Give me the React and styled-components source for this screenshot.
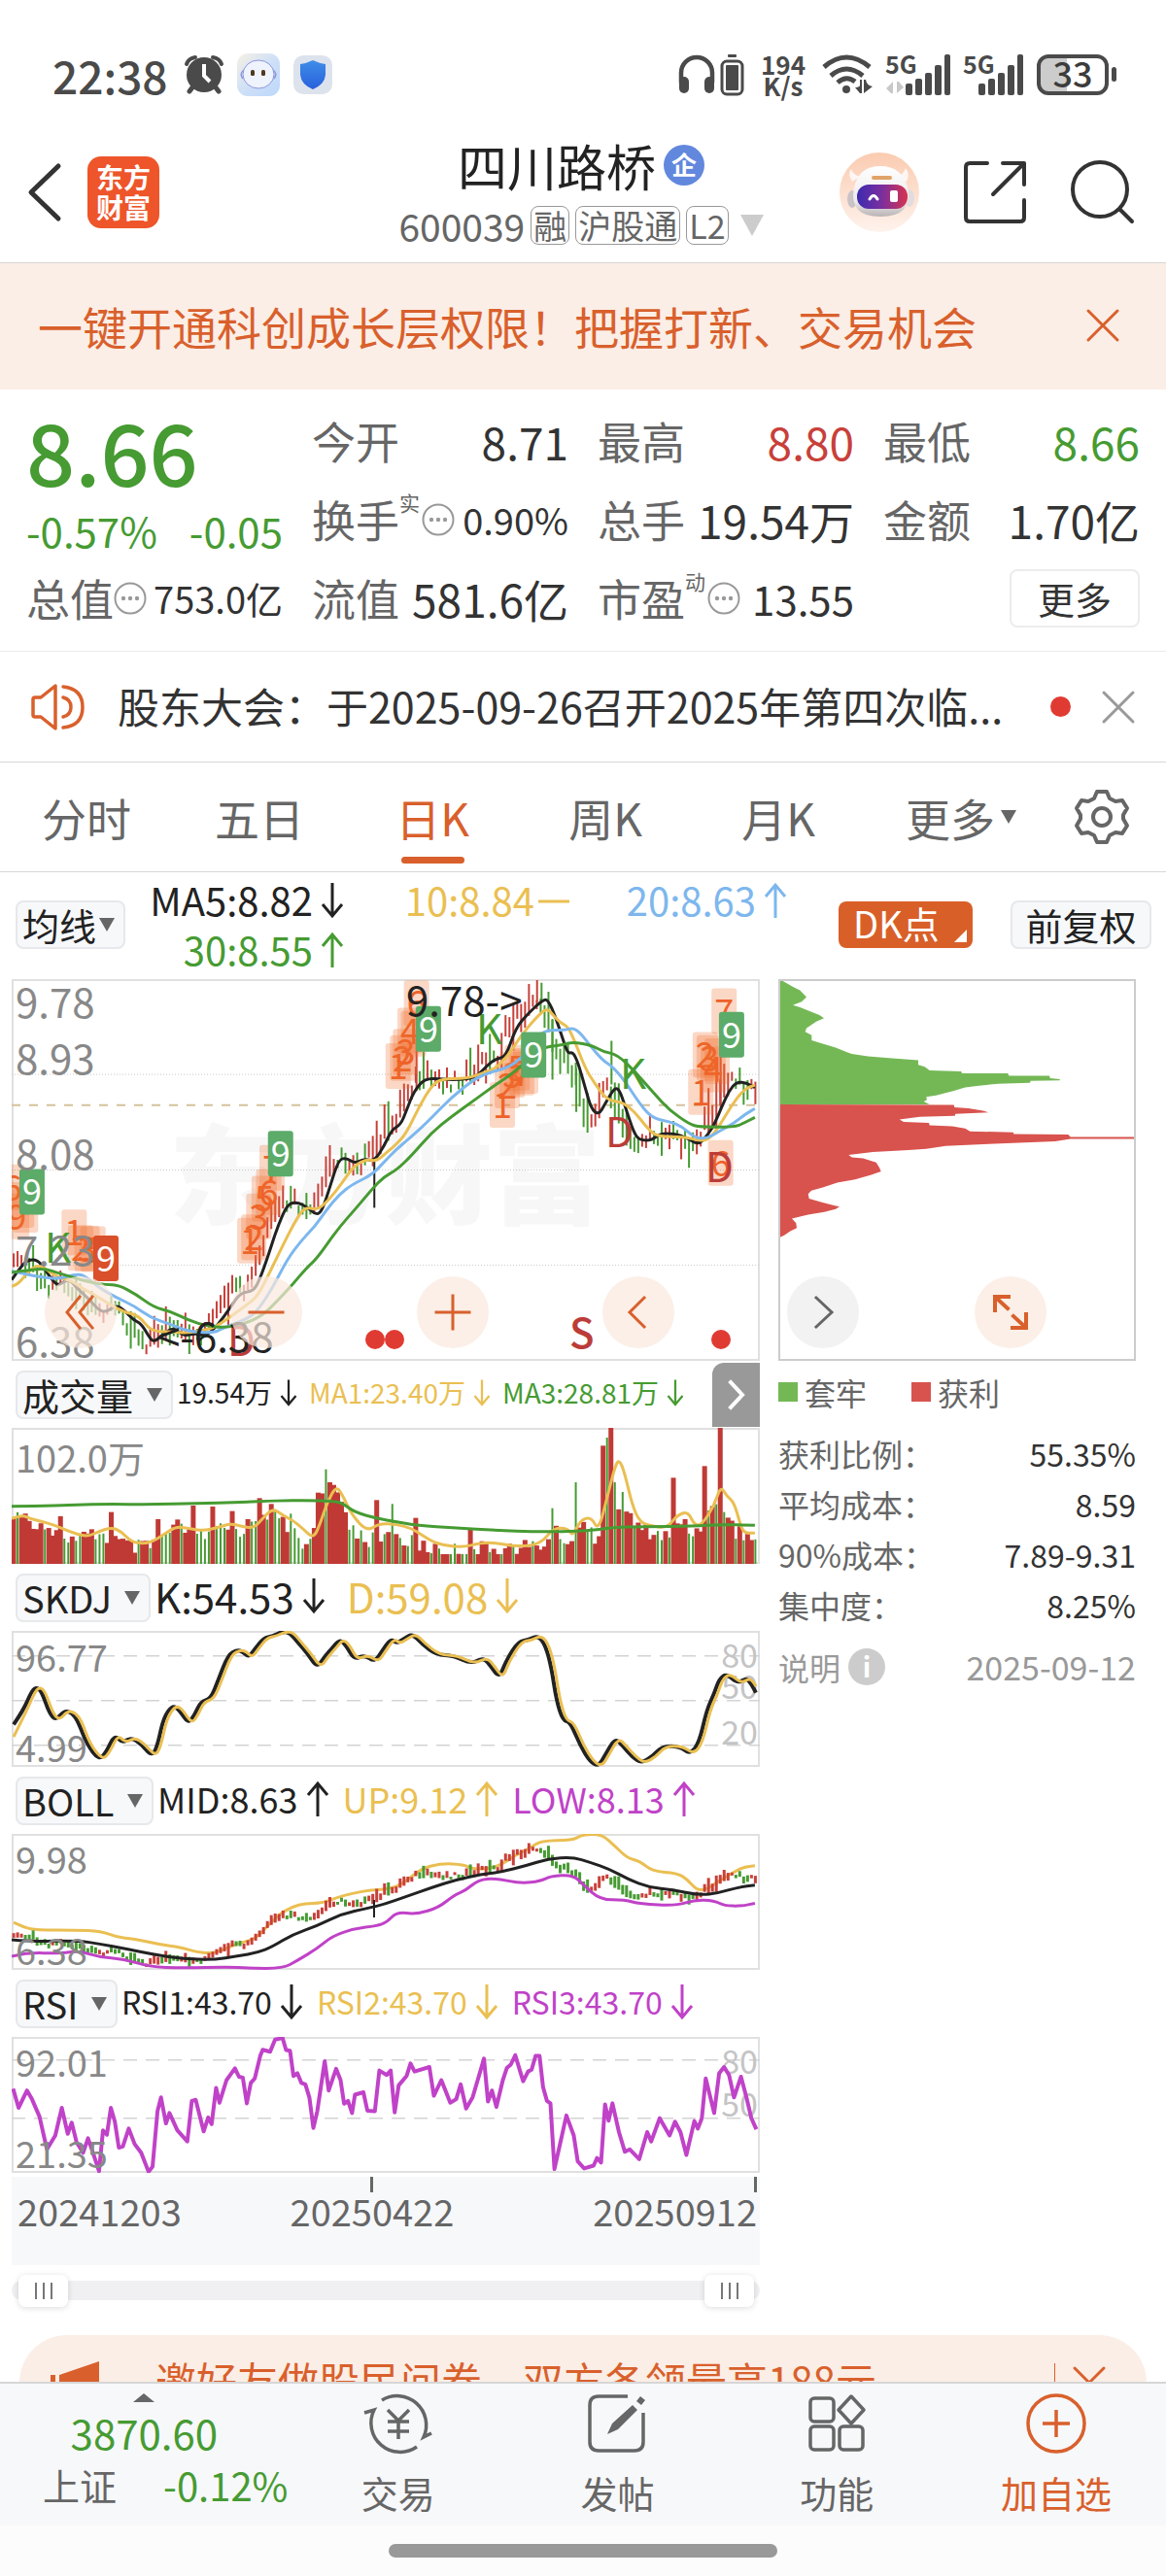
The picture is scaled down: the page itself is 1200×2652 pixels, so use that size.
import React from 'react'
import styled, { createGlobalStyle } from 'styled-components'

const colors = {
  black: '#222222',
  text: '#333333',
  label: '#666666',
  muted: '#999999',
  green: '#469b32',
  red: '#c8403a',
  orange: '#d9602c',
  orangeSoft: '#fbeee6',
  yellow: '#eabf52',
  blue: '#7db7ee',
  magenta: '#c042c8',
  panel: '#f7f8fa',
  line: '#d6d6d6',
  frame: '#e0e0e0'
}

const GlobalStyle = createGlobalStyle`
  * {
    box-sizing: border-box;
  }

  body {
    margin: 0;
    color: ${colors.text};
    background-color: #ffffff;
    font-family: 'Noto Sans CJK SC', 'Noto Sans', sans-serif;
  }

  button, select, input {
    margin: 0;
    padding: 0;
    border: 0;
    color: inherit;
    background: none;
    font-family: inherit;
    font-size: inherit;
  }

  svg {
    display: block;
    flex: none;
    overflow: visible;
  }
`

/* ---------- data ---------- */

const quoteCells = [
  { label: '今开', value: '8.71' },
  { label: '最高', value: '8.80', color: colors.red },
  { label: '最低', value: '8.66', color: colors.green },
  { label: '换手', mark: '实', hint: true, value: '0.90%', size: 38 },
  { label: '总手', value: '19.54万' },
  { label: '金额', value: '1.70亿' }
]

const tabs = ['分时', '五日', '日K', '周K', '月K']

const averages = [
  { text: 'MA5:8.82', trend: 'down', color: colors.black },
  { text: '10:8.84', trend: 'flat', color: colors.yellow },
  { text: '20:8.63', trend: 'up', color: colors.blue },
  { text: '30:8.55', trend: 'up', color: colors.green }
]

const chipRows = [
  ['获利比例：', '55.35%'],
  ['平均成本：', '8.59'],
  ['90%成本：', '7.89-9.31'],
  ['集中度：', '8.25%']
]

const parse = text => text.split(' ').map(pair => pair.split(',').map(Number))

const ma5 = parse('24,985 40,950 55,925 75,922 90,950 105,985 118,1003 130,990 142,985 155,1010 180,1045 200,1080 215,1085 235,1062 255,1085 270,1110 285,1120 300,1160 310,1178 325,1160 350,1130 370,1160 395,1150 415,1160 440,1125 465,1070 485,1025 512,1020 525,980 540,915 560,820 580,750 600,745 620,760 638,785 650,770 665,700 683,612 700,608 715,625 735,610 755,618 775,570 790,520 808,505 820,460 835,400 858,360 895,365 930,365 960,358 980,325 1000,300 1020,295 1040,205 1065,160 1095,118 1105,118 1120,170 1135,240 1145,285 1155,280 1165,310 1180,390 1192,455 1207,475 1220,440 1240,388 1250,400 1262,455 1278,530 1290,553 1315,553 1330,532 1360,532 1385,545 1408,568 1425,540 1440,505 1455,450 1470,400 1485,372 1505,375 1522,390')
const ma10 = parse('24,1005 35,1003 60,955 80,938 100,960 120,980 142,985 170,1015 195,1035 220,1060 250,1085 280,1095 305,1145 340,1145 370,1150 400,1145 430,1135 460,1105 500,1060 520,1035 545,960 570,880 595,805 615,758 640,770 665,735 690,685 715,630 740,612 760,618 780,590 800,565 820,530 845,450 870,385 890,362 940,362 975,345 1000,330 1025,290 1050,230 1080,175 1103,143 1115,165 1130,190 1145,200 1160,250 1180,330 1200,380 1225,430 1255,435 1280,465 1305,515 1325,542 1380,542 1410,555 1430,550 1450,510 1475,445 1500,395 1522,382')
const ma20 = parse('24,958 50,968 90,978 120,982 150,968 170,970 200,1010 235,1040 270,1065 305,1103 340,1120 380,1145 430,1150 450,1135 500,1105 520,1080 550,1010 580,920 610,860 635,820 660,765 685,720 710,690 750,660 775,620 800,580 820,555 860,500 910,420 960,360 990,342 1030,325 1060,285 1080,240 1100,212 1140,212 1155,205 1170,220 1190,260 1215,305 1235,325 1260,370 1290,440 1315,485 1350,495 1375,510 1400,545 1425,548 1450,525 1480,500 1500,475 1522,455')
const ma30 = parse('24,962 60,955 90,950 120,965 180,993 215,1000 240,1002 275,1030 310,1070 345,1083 380,1110 420,1130 460,1133 495,1120 530,1095 560,1050 590,1000 620,945 640,918 680,830 720,760 750,705 775,665 800,645 830,600 870,530 910,480 960,425 1000,380 1030,350 1060,310 1090,270 1110,262 1135,258 1155,248 1195,260 1215,278 1245,288 1280,340 1320,410 1350,460 1390,503 1410,512 1480,512 1500,500 1522,482')

const volumeMa1 = parse('24,490 45,478 60,490 80,497 110,510 140,530 175,547 200,530 225,517 245,530 265,562 290,568 310,560 330,540 355,515 380,520 410,528 440,518 465,505 490,515 512,520 530,490 550,458 570,480 590,495 610,520 632,552 645,510 660,440 678,390 690,415 710,480 740,530 765,505 800,508 830,520 850,540 880,568 930,580 970,565 1000,565 1040,577 1090,570 1115,520 1145,520 1155,545 1170,495 1192,485 1207,528 1225,420 1240,330 1248,308 1258,340 1275,450 1290,500 1310,512 1345,520 1365,480 1387,468 1400,510 1415,510 1440,450 1453,390 1465,420 1480,440 1492,505 1500,535 1522,535')
const volumeMa3 = parse('24,452 70,452 150,448 220,445 300,447 400,443 480,440 560,435 620,434 670,436 690,442 715,470 760,490 800,500 840,511 920,519 1000,526 1080,531 1150,530 1200,526 1235,517 1300,515 1400,514 1450,508 1522,511')
// level the ordinary bars follow, without the single heavy days
const volumeBase = parse('24,470 100,510 150,555 200,530 265,575 300,575 360,510 400,550 430,520 490,520 530,460 570,490 620,575 650,420 680,400 705,500 740,550 790,540 850,570 900,585 1090,570 1120,530 1160,560 1180,490 1205,550 1250,430 1280,510 1350,545 1380,490 1400,540 1430,460 1460,450 1480,520 1522,550')
// x, y, 1 for a rise and 0 for a fall
const volumeSpikes = parse('120,483,1 222,470,1 316,492,1 387,450,1 433,453,1 465,467,1 527,427,1 550,445,1 590,475,0 645,410,1 661,338,0 669,378,1 763,433,1 795,445,0 842,488,1 950,525,1 1115,458,0 1162,378,0 1217,265,1 1226,240,0 1234,210,1 1242,378,0 1257,408,0 1359,364,1 1422,328,1 1453,210,1')

const skdj = parse('28,1125 48,1080 65,1020 75,1010 85,1025 100,1090 113,1112 130,1083 145,1088 158,1115 175,1185 200,1235 215,1210 231,1157 247,1182 265,1165 285,1185 307,1224 318,1190 330,1105 348,1066 362,1080 380,1123 393,1095 405,1055 425,1046 440,990 460,910 478,895 490,900 502,918 515,890 532,858 550,852 570,838 585,842 600,870 620,905 640,950 655,915 670,890 685,862 698,880 714,925 735,910 756,932 770,900 788,860 800,875 815,860 832,845 850,875 880,910 915,912 950,938 975,918 990,945 1007,982 1020,930 1045,868 1065,865 1085,850 1100,880 1112,950 1122,1050 1135,1113 1150,1118 1170,1190 1190,1240 1207,1254 1220,1220 1240,1167 1255,1190 1275,1225 1293,1244 1315,1225 1335,1192 1370,1192 1392,1217 1410,1180 1425,1080 1440,1030 1450,985 1465,968 1487,998 1505,982 1515,1000 1524,1027')

const bollUp = parse('28,445 50,460 75,467 150,467 205,470 235,488 270,492 320,508 365,517 395,530 425,535 450,525 475,508 515,493 540,455 565,420 590,400 615,390 650,390 680,373 710,362 745,352 775,350 800,342 820,325 850,290 890,275 935,278 950,290 980,292 1010,280 1035,255 1070,230 1090,210 1155,208 1170,195 1190,191 1215,193 1240,225 1265,260 1290,268 1315,298 1365,303 1385,320 1405,352 1425,350 1450,325 1480,300 1500,285 1522,282')
const bollMid = parse('24,495 60,500 160,498 200,507 250,520 310,538 370,550 430,553 480,542 520,532 550,515 590,480 640,455 690,420 740,405 775,393 820,370 870,345 920,322 970,307 1010,300 1060,282 1105,262 1155,257 1190,272 1230,292 1265,320 1310,345 1355,350 1410,367 1450,360 1490,343 1522,338')
const bollLow = parse('24,543 55,532 120,535 160,527 200,545 250,550 300,573 370,577 460,573 500,577 570,578 600,555 640,520 670,485 715,463 760,455 780,445 800,415 840,422 885,402 915,367 940,352 965,322 1000,318 1050,333 1090,326 1110,312 1155,308 1175,335 1210,380 1260,380 1290,392 1365,397 1400,380 1440,382 1460,397 1495,398 1522,390')

const rsi = parse('27,925 38,980 55,930 65,955 80,1005 95,1100 112,1060 125,980 137,1055 145,1023 155,1080 168,1110 178,1068 188,1110 200,1163 208,1045 216,1058 224,980 232,1020 240,1095 248,1092 260,1040 272,1085 285,1110 300,1165 308,1150 318,990 325,950 335,1025 342,995 358,1045 378,1077 387,960 395,957 411,1048 420,1008 427,1027 436,922 443,965 457,900 474,866 482,890 490,893 498,967 506,908 514,895 525,830 530,812 545,818 555,783 570,778 577,813 585,815 592,888 600,880 608,908 616,912 624,950 632,1038 640,990 655,845 663,930 678,867 687,900 694,968 702,960 710,995 716,942 733,935 741,988 756,990 765,872 780,885 788,872 796,993 804,915 820,888 828,852 836,875 866,862 875,945 890,900 908,965 920,955 929,912 940,982 953,950 976,838 984,962 992,930 1001,977 1014,900 1022,865 1030,855 1039,828 1055,903 1065,875 1072,870 1080,830 1088,830 1095,920 1103,960 1110,967 1118,1157 1130,1080 1142,1002 1157,1060 1165,1135 1178,1155 1197,1147 1204,1125 1212,1138 1220,970 1227,1017 1235,967 1248,1050 1260,1107 1270,1100 1289,1128 1305,1050 1313,1077 1330,1010 1350,1060 1361,1020 1372,1050 1384,1116 1400,1018 1407,1040 1415,1010 1423,895 1440,995 1450,880 1460,862 1470,885 1480,950 1494,890 1505,950 1515,1010 1525,1042')

const trapped = parse('66,38 85,45 110,55 130,62 150,76 135,86 108,93 130,98 160,106 190,114 204,121 180,128 150,142 146,150 166,157 166,168 205,176 240,183 275,193 290,197 340,202 415,206 495,210 495,220 515,224 530,232 628,234 630,238 772,238 775,243 900,243 902,248 932,250 932,253 842,254 840,258 742,260 682,264 640,268 605,275 550,285 520,288 522,294 512,298 530,304 66,304')
const profit = parse('66,304 605,305 607,310 650,312 695,317 712,321 610,324 608,328 500,330 437,336 450,341 528,343 530,348 600,350 640,355 655,361 788,363 790,367 958,368 965,373 1164,373 1164,377 965,377 918,382 712,388 580,392 520,398 465,401 355,405 280,411 290,416 325,418 365,427 375,438 380,446 350,453 300,463 245,470 200,480 165,487 155,494 158,504 200,512 235,518 252,521 240,526 205,532 155,538 105,546 118,556 120,566 100,573 80,582 66,586')

const countdown = [
  [25, 700, '6'], [34, 790, '9'], [44, 755, ''], [52, 770, ''],
  [150, 840, '1'], [163, 888, '2'], [176, 890, '3'], [188, 892, '5'],
  [504, 865, '1'], [512, 855, '2'], [522, 790, '3'], [533, 735, '5'], [542, 715, '6'], [549, 640, '7'],
  [803, 325, '1'], [812, 300, '2'], [818, 280, '3'], [827, 215, '4'], [834, 225, ''], [840, 130, '6'],
  [1013, 445, '1'], [1023, 385, '2'], [1033, 352, '3'], [1043, 330, '5'], [1052, 345, '7'], [1060, 340, ''],
  [1413, 405, '1'], [1422, 290, '2'], [1430, 300, '3'], [1438, 335, '4'], [1446, 310, ''], [1460, 155, '7'],
  [1453, 625, '6']
]

const nines = [
  [65, 714], [566, 596], [864, 210], [1076, 290], [1475, 228]
]

/* ---------- chart helpers ---------- */

const WIDTH = 770
const PRICE = { top: 54, bottom: 1236, height: 393 }
const VOLUME = { top: 210, bottom: 630, height: 140 }
const SKDJ = { top: 836, bottom: 1256, height: 140 }
const BOLL = { top: 190, bottom: 582, height: 140 }
const RSI = { top: 775, bottom: 1168, height: 140 }

const toX = x => (x - 24) / 1508 * WIDTH
const toY = (y, { top, bottom, height }) => (y - top) / (bottom - top) * height
const project = (points, scale) => points.map(([x, y]) => [toX(x), toY(y, scale)])

const straight = points => 'M' + points.map(([x, y]) => `${x.toFixed(1)} ${y.toFixed(1)}`).join('L')

const smooth = points => {
  const parts = [`M${points[0].join(' ')}`]
  for (let i = 1; i < points.length - 1; i++) {
    const [x, y] = points[i]
    const [nx, ny] = points[i + 1]
    parts.push(`Q${x} ${y} ${(x + nx) / 2} ${(y + ny) / 2}`)
  }
  parts.push(`L${points[points.length - 1].join(' ')}`)
  return parts.join('')
}

const noise = i => {
  const v = Math.sin(i * 12.9898) * 43758.5453
  return v - Math.floor(v)
}

const valueAt = (points, x) => {
  const next = points.findIndex(([px]) => px >= x)
  if (next === -1) return points[points.length - 1][1]
  if (next === 0) return points[0][1]
  const [x0, y0] = points[next - 1]
  const [x1, y1] = points[next]
  return y0 + (y1 - y0) * (x - x0) / (x1 - x0)
}

const days = Array.from({ length: 191 }, (_, i) => 28 + i * 1495 / 190)

const candles = days.map((x, i) => {
  const middle = valueAt(ma5, x + 16) + (noise(i + 7) - 0.5) * 56
  const slope = valueAt(ma5, x + 24) - valueAt(ma5, x + 4)
  const half = 12 + noise(i) * noise(i + 50) * 56 + Math.min(Math.abs(slope) / 4, 18)
  return {
    x,
    high: Math.max(middle - half, 56),
    low: Math.min(middle + half, 1232),
    up: slope + (noise(i + 90) - 0.5) * 60 < 0
  }
})

const volumes = days.map((x, i) => {
  const spike = volumeSpikes.find(([sx]) => Math.abs(sx - x) < 4)
  if (spike) return { x, y: spike[1], up: spike[2] === 1 }
  return { x, y: Math.min(valueAt(volumeBase, x) + (noise(i + 31) - 0.4) * 50, 600), up: noise(i + 11) > 0.42 }
})

/* ---------- layout ---------- */

const Page = styled.div`
  min-height: 100vh;
  padding-bottom: 150px;
  overflow: hidden;
`

const StatusBar = styled.div`
  display: flex;
  align-items: center;
  justify-content: space-between;
  height: 130px;
  padding: 24px 50px 0 54px;
  color: #4a4a4a;
`

const StatusGroup = styled.div`
  display: flex;
  align-items: center;
  gap: ${({ $gap }) => $gap}px;
`

const Clock = styled.span`
  margin-right: 3px;
  font-size: 46px;
  font-weight: 500;
  line-height: 48px;
`

const Speed = styled.span`
  margin: 0 4px;
  font-size: 26px;
  font-weight: 700;
  line-height: 22px;
  text-align: center;
`

const Header = styled.header`
  display: grid;
  grid-template-columns: 1fr auto 1fr;
  align-items: center;
  height: 141px;
  padding: 0 32px 0 28px;
  border-bottom: 1px solid ${colors.line};
`

const HeaderLeft = styled.div`
  display: flex;
  align-items: center;
  gap: 26px;
  padding-bottom: 4px;
`

const HeaderRight = styled.div`
  display: flex;
  align-items: center;
  justify-content: flex-end;
  gap: 46px;
  padding-bottom: 4px;
`

const IconButton = styled.button`
  display: flex;
  align-items: center;
  justify-content: center;
  cursor: pointer;
`

const Logo = styled.a`
  display: flex;
  align-items: center;
  justify-content: center;
  width: 74px;
  height: 74px;
  border-radius: 14px;
  color: #ffffff;
  background-color: #ee552a;
  font-size: 28px;
  font-weight: 700;
  line-height: 31px;
  text-align: center;
  text-decoration: none;
`

const Heading = styled.div`
  display: flex;
  flex-direction: column;
  align-items: center;
  gap: 4px;
  padding-bottom: 8px;
`

const TitleRow = styled.div`
  display: flex;
  align-items: center;
  gap: 8px;
`

const Title = styled.h1`
  margin: 0;
  color: ${colors.black};
  font-size: 51px;
  font-weight: 400;
  line-height: 68px;
`

const TitleBadge = styled.span`
  width: 42px;
  height: 42px;
  border-radius: 50%;
  color: #ffffff;
  background-color: #6288de;
  font-size: 26px;
  font-weight: 700;
  line-height: 40px;
  text-align: center;
`

const CodeRow = styled.div`
  display: flex;
  align-items: center;
  gap: 6px;
  color: ${colors.label};
  font-size: 39px;
  line-height: 48px;
`

const Tag = styled.span`
  padding: 0 2px;
  border: 1px solid ${colors.muted};
  border-radius: 8px;
  font-size: 34px;
  line-height: 38px;
`

const Caret = styled.span`
  width: 0;
  height: 0;
  margin-left: ${({ $gap }) => $gap || 0}px;
  border: ${({ $size }) => $size || 8}px solid transparent;
  border-top: ${({ $size }) => ($size || 8) * 2 - 2}px solid ${({ $color }) => $color || colors.label};
  border-bottom-width: 0;
`

const TopBanner = styled.div`
  display: flex;
  align-items: center;
  justify-content: space-between;
  height: 130px;
  padding: 0 48px 2px 39px;
  color: ${colors.orange};
  background-color: ${colors.orangeSoft};
  font-size: 46px;
  line-height: 60px;
`

const Quote = styled.section`
  display: grid;
  grid-template-columns: repeat(4, 1fr);
  grid-auto-rows: 81px;
  column-gap: 30px;
  padding: 12px 27px 14px;
  border-bottom: 1px solid #ebebeb;
`

const PriceBlock = styled.div`
  grid-row: span 2;
  color: ${colors.green};
`

const Price = styled.div`
  font-size: 88px;
  font-weight: 500;
  line-height: 100px;
`

const Change = styled.div`
  display: flex;
  justify-content: space-between;
  font-size: 42px;
  line-height: 66px;
`

const Cell = styled.div`
  display: flex;
  align-items: center;
  justify-content: space-between;
  white-space: nowrap;
  line-height: 60px;
`

const CellLabel = styled.span`
  display: flex;
  align-items: center;
  color: ${colors.label};
  font-size: 45px;
`

const Mark = styled.sup`
  align-self: flex-start;
  margin-right: 2px;
  font-size: 21px;
  line-height: 24px;
`

const CellValue = styled.span`
  color: ${({ $color }) => $color || colors.text};
  font-size: ${({ $size }) => $size || 46}px;
`

const MoreButton = styled.button`
  width: 134px;
  height: 60px;
  margin-left: auto;
  border: 2px solid #ececec;
  border-radius: 8px;
  font-size: 38px;
  line-height: 50px;
  cursor: pointer;
`

const Notice = styled.section`
  display: flex;
  align-items: center;
  height: 114px;
  padding: 0 32px;
  border-bottom: 1px solid ${colors.line};
`

const NoticeText = styled.p`
  flex: 1;
  margin: 0 0 4px 33px;
  overflow: hidden;
  font-size: 43px;
  line-height: 60px;
  white-space: nowrap;
`

const Dot = styled.span`
  width: 21px;
  height: 21px;
  margin-right: 32px;
  border-radius: 50%;
  background-color: #e03b33;
`

const Tabs = styled.nav`
  display: grid;
  grid-template-columns: repeat(6, 178fr) 132fr;
  height: 113px;
  border-bottom: 1px solid ${colors.line};
`

const Tab = styled.button`
  position: relative;
  display: flex;
  align-items: center;
  justify-content: center;
  color: ${({ $active }) => $active ? colors.orange : colors.label};
  font-size: 46px;
  line-height: 60px;
  cursor: pointer;

  &::after {
    content: '';
    position: absolute;
    bottom: 8px;
    width: 65px;
    height: 7px;
    border-radius: 4px;
    background-color: ${({ $active }) => $active ? colors.orange : 'transparent'};
  }
`

const MoreTab = styled(Tab)`
  padding-left: 20px;
`

const AverageBar = styled.section`
  display: flex;
  align-items: center;
  height: 110px;
  padding: 0 15px 2px 16px;
`

const Picker = styled.label`
  display: inline-flex;
  align-items: center;
  height: 50px;
  padding: 0 9px 0 5px;
  border: 2px solid #e6e8eb;
  border-radius: 8px;
  color: ${colors.black};
  background-color: ${colors.panel};
  font-size: 38px;
`

const Select = styled.select`
  appearance: none;
  height: 46px;
  line-height: 42px;
  outline: none;
`

const AverageValues = styled.div`
  display: grid;
  grid-template-columns: repeat(3, 228px);
  margin-right: auto;
  margin-left: -3px;
`

const Reading = styled.span`
  display: inline-flex;
  align-items: center;
  justify-content: flex-end;
  gap: 8px;
  color: ${({ $color }) => $color};
  font-size: ${({ $size }) => $size}px;
  line-height: 51px;
  white-space: nowrap;
`

const PointButton = styled.button`
  display: flex;
  align-items: flex-end;
  justify-content: space-between;
  width: 138px;
  height: 48px;
  padding: 0 6px 6px 15px;
  margin-right: 39px;
  border-radius: 8px;
  color: #ffffff;
  background-color: #d95f29;
  font-size: 38px;
  line-height: 40px;
  white-space: nowrap;
  cursor: pointer;
`

const AdjustButton = styled.button`
  width: 145px;
  height: 50px;
  border: 2px solid #e6e8eb;
  border-radius: 8px;
  color: ${colors.black};
  background-color: ${colors.panel};
  font-size: 38px;
  line-height: 42px;
  cursor: pointer;
`

const Board = styled.main`
  display: grid;
  grid-template-columns: 770fr 368fr;
  align-items: start;
  column-gap: 19px;
  padding: 0 31px 0 12px;
`

const ChartBox = styled.div`
  position: relative;
`

const ChartSvg = styled.svg`
  width: 100%;
  overflow: hidden;
`

const Controls = styled.div`
  position: absolute;
  right: 88px;
  bottom: 13px;
  left: 34px;
  display: flex;
  justify-content: space-between;
`

const ChipControls = styled(Controls)`
  right: 92px;
  left: 9px;
`

const RoundButton = styled.button`
  display: flex;
  align-items: center;
  justify-content: center;
  width: 74px;
  height: 74px;
  border-radius: 50%;
  background-color: ${({ $grey }) => $grey ? '#f2f2f2' : 'rgba(249, 232, 221, 0.7)'};
  cursor: pointer;
`

const IndicatorHead = styled.div`
  display: flex;
  align-items: center;
  height: 69px;
  padding-left: 4px;
`

const Readings = styled.div`
  display: flex;
  gap: ${({ $gap }) => $gap}px;
  margin-left: 4px;
  padding-bottom: 4px;
`

const NextButton = styled.button`
  display: flex;
  align-items: center;
  justify-content: center;
  width: 49px;
  height: 66px;
  margin-left: auto;
  border-radius: 12px 0 0 0;
  background-color: #999999;
  cursor: pointer;
`

const DateAxis = styled.div`
  display: grid;
  grid-template-columns: 9fr auto 10fr;
  height: 91px;
  margin-top: 4px;
  padding: 0 3px 0 6px;
  color: ${colors.label};
  background-color: ${colors.panel};
  font-size: 38px;
  line-height: 38px;
`

const DateMark = styled.span`
  display: flex;
  flex-direction: column;
  align-items: ${({ $align }) => $align};

  &::before {
    content: '';
    width: 3px;
    height: 16px;
    background-color: ${({ $tick }) => $tick ? colors.label : 'transparent'};
  }
`

const RangeTrack = styled.div`
  position: relative;
  height: 20px;
  margin-top: 16px;
  border-radius: 10px;
  background-color: #f0f0f3;
`

const RangeInput = styled.input`
  position: absolute;
  top: -7px;
  right: 6px;
  left: 7px;
  width: calc(100% - 13px);
  height: 34px;
  appearance: none;
  pointer-events: none;

  &::-webkit-slider-thumb {
    appearance: none;
    width: 51px;
    height: 33px;
    border-radius: 7px;
    background:
      linear-gradient(#777777, #777777) 17px 8px / 2px 17px no-repeat,
      linear-gradient(#777777, #777777) 25px 8px / 2px 17px no-repeat,
      linear-gradient(#777777, #777777) 33px 8px / 2px 17px no-repeat,
      #ffffff;
    box-shadow: 0 1px 6px rgba(0, 0, 0, 0.14);
    pointer-events: auto;
  }
`

const Legend = styled.div`
  display: flex;
  gap: 46px;
  height: 69px;
  padding-bottom: 5px;
  color: ${colors.label};
  font-size: 32px;
  line-height: 60px;
`

const LegendItem = styled.span`
  display: flex;
  align-items: center;
  gap: 7px;

  &::before {
    content: '';
    width: 20px;
    height: 20px;
    background-color: ${({ $color }) => $color};
  }
`

const ChipTable = styled.table`
  width: 100%;
  border-collapse: collapse;
  font-size: 32px;
  line-height: 52px;

  th, td {
    padding: 0;
    font-weight: 400;
    text-align: left;
    white-space: nowrap;
  }

  th {
    color: ${colors.label};
  }

  td {
    text-align: right;
  }
`

const ChipFoot = styled.div`
  display: flex;
  align-items: center;
  justify-content: space-between;
  margin-top: 12px;
  color: ${colors.muted};
  font-size: 32px;
  line-height: 52px;
`

const Explain = styled.span`
  display: flex;
  align-items: center;
  gap: 8px;
`

const ChipDate = styled.span`
  font-size: 34px;
`

const Info = styled.span`
  width: 38px;
  height: 38px;
  border-radius: 50%;
  color: #ffffff;
  background-color: #cccccc;
  font-size: 28px;
  font-weight: 700;
  line-height: 36px;
  text-align: center;
`

const Promo = styled.aside`
  display: flex;
  align-items: center;
  height: 98px;
  margin: 36px 20px 0;
  padding: 0 42px 0 32px;
  border-radius: 49px;
  color: ${colors.orange};
  background-color: ${colors.orangeSoft};
  font-size: 42px;
  line-height: 60px;
`

const PromoText = styled.span`
  flex: 1;
  margin-left: 58px;
  padding-bottom: 6px;
  white-space: nowrap;
`

const PromoDivider = styled.span`
  width: 1px;
  height: 40px;
  margin-right: 18px;
  background-color: ${colors.orange};
`

const BottomBar = styled.footer`
  position: fixed;
  right: 0;
  bottom: 0;
  left: 0;
  border-top: 2px solid ${colors.line};
  background-color: #fcfcfc;
`

const BottomNav = styled.nav`
  display: grid;
  grid-template-columns: 297fr repeat(4, 226fr);
  height: 146px;
  color: ${colors.label};
  background-color: ${colors.panel};
  font-size: 38px;
`

const IndexBox = styled.a`
  display: flex;
  flex-direction: column;
  align-items: center;
  color: ${colors.green};
  text-decoration: none;
`

const IndexCaret = styled.span`
  width: 0;
  height: 0;
  margin-top: 10px;
  border: 11px solid transparent;
  border-top-width: 0;
  border-bottom: 9px solid ${colors.label};
`

const IndexValue = styled.span`
  font-size: 42px;
  line-height: 62px;
`

const IndexRow = styled.span`
  display: flex;
  align-items: center;
  gap: 48px;
  padding-left: 44px;
  align-self: flex-start;
  font-size: 40px;
  line-height: 46px;
`

const IndexName = styled.span`
  color: ${colors.label};
  font-size: 38px;
`

const NavItem = styled.button`
  display: flex;
  flex-direction: column;
  align-items: center;
  gap: 14px;
  padding-top: 9px;
  color: ${({ $accent }) => $accent ? colors.orange : colors.label};
  line-height: 50px;
  cursor: pointer;
`

const HomeArea = styled.div`
  display: flex;
  justify-content: center;
  height: 52px;
  padding-top: 19px;

  &::before {
    content: '';
    width: 400px;
    height: 14px;
    border-radius: 7px;
    background-color: #999999;
  }
`

/* ---------- icons ---------- */

const Cross = ({ size = 34, width = 3, color = 'currentColor' }) => (
  <svg width={size} height={size} viewBox="0 0 34 34" fill="none" stroke={color} strokeWidth={width} strokeLinecap="round">
    <path d="M2 2L32 32M32 2L2 32"/>
  </svg>
)

const Arrow = ({ trend, width = 24 }) => (
  <svg width={width} height="36" viewBox="0 0 24 36" fill="none" stroke="currentColor" strokeWidth="3">
    {trend === 'up' && <path d="M12 36V2M2 14L12 2L22 14"/>}
    {trend === 'down' && <path d="M12 0V34M2 22L12 34L22 22"/>}
    {trend === 'flat' && <path d="M-4 19H28"/>}
  </svg>
)

const Dots = () => (
  <svg width="34" height="34" viewBox="0 0 34 34" fill={colors.muted}>
    <circle cx="17" cy="17" r="15.5" fill="none" stroke={colors.muted} strokeWidth="2"/>
    <circle cx="10" cy="17" r="2.2"/>
    <circle cx="17" cy="17" r="2.2"/>
    <circle cx="24" cy="17" r="2.2"/>
  </svg>
)

const AlarmIcon = () => (
  <svg width="40" height="40" viewBox="0 0 40 40" fill="none">
    <path d="M8 33L5 37M32 33L35 37" stroke="#4a4a4a" strokeWidth="5" strokeLinecap="round"/>
    <path d="M2 9Q4 3 11 2M38 9Q36 3 29 2" stroke="#4a4a4a" strokeWidth="4" strokeLinecap="round"/>
    <circle cx="20" cy="20" r="18" fill="#4a4a4a"/>
    <path d="M20 9V21L26 27" stroke="#ffffff" strokeWidth="4"/>
  </svg>
)

const FaceApp = () => (
  <svg width="44" height="44" viewBox="0 0 44 44">
    <defs>
      <linearGradient id="faceBg" x1="0" y1="0" x2="1" y2="1">
        <stop offset="0" stopColor="#f7f1e4"/>
        <stop offset="0.5" stopColor="#cfe0f7"/>
        <stop offset="1" stopColor="#bcd8fb"/>
      </linearGradient>
    </defs>
    <rect width="44" height="44" rx="11" fill="url(#faceBg)"/>
    <path d="M7 17Q2 21 6 26M37 17Q42 21 38 26" fill="none" stroke="#8f96dc" strokeWidth="1.5"/>
    <ellipse cx="22" cy="21.500" rx="16" ry="14.500" fill="#eef3fd" stroke="#8f96dc" strokeWidth="1"/>
    <rect x="14" y="17" width="4" height="6" rx="1.500" fill="#51371f"/>
    <rect x="25" y="17" width="4" height="6" rx="1.500" fill="#51371f"/>
  </svg>
)

const ShieldApp = () => (
  <svg width="40" height="40" viewBox="0 0 40 40">
    <defs>
      <linearGradient id="shield" x1="0" y1="0" x2="0" y2="1">
        <stop offset="0" stopColor="#3f8ee8"/>
        <stop offset="1" stopColor="#2860dc"/>
      </linearGradient>
    </defs>
    <rect width="40" height="40" rx="10" fill="#dde3ec"/>
    <path d="M20 5Q26 8 33 9V20Q32 30 20 35Q8 30 7 20V9Q14 8 20 5Z" fill="url(#shield)"/>
  </svg>
)

const HeadphonesIcon = () => (
  <svg width="68" height="44" viewBox="0 0 68 44" fill="#4a4a4a">
    <path d="M3 30V20A16 16 0 0 1 35 20V30" fill="none" stroke="#4a4a4a" strokeWidth="4.5"/>
    <rect x="1" y="24" width="10" height="17" rx="5"/>
    <rect x="27" y="24" width="10" height="17" rx="5"/>
    <rect x="51" y="1" width="9" height="3" rx="1"/>
    <rect x="45" y="8" width="21" height="34" rx="5" fill="none" stroke="#4a4a4a" strokeWidth="3"/>
    <rect x="49" y="12" width="13" height="26" rx="1"/>
  </svg>
)

const WifiIcon = () => (
  <svg width="52" height="42" viewBox="0 0 52 42" fill="none" stroke="#4a4a4a" strokeWidth="5">
    <path d="M2 13Q25 -7 49 13"/>
    <path d="M9 22Q25 8 42 22"/>
    <path d="M16 29Q25 21 34 28"/>
    <circle cx="25" cy="36" r="4" fill="#4a4a4a" stroke="none"/>
    <path d="M41 26V40H39L34 34Q38 34 39 32V26ZM43 26V40L52 33Q46 32 45 26Z" fill="#4a4a4a" stroke="none"/>
  </svg>
)

const Signal = ({ data }) => (
  <svg width={data ? 68 : 62} height="42" viewBox={data ? '0 0 68 42' : '6 0 62 42'} fill="#4a4a4a">
    <text x={data ? 0 : 5} y="20" fontSize="25" fontWeight="700">5G</text>
    {data && <path d="M8 28V40H6L1 35M12 28V40L19 34L14 28Z" fill="#c8c8c8"/>}
    <rect x="21" y="30" width="7" height="12" rx="2"/>
    <rect x="31" y="25" width="7" height="17" rx="2"/>
    <rect x="41" y="19" width="7" height="23" rx="2"/>
    <rect x="51" y="11" width="7" height="31" rx="2"/>
    <rect x="61" y="0" width="6" height="42" rx="2"/>
  </svg>
)

const BatteryIcon = () => (
  <svg width="83" height="42" viewBox="0 0 83 42">
    <path d="M12 2H31V40H12Q2 40 2 30V12Q2 2 12 2Z" fill="#cccccc"/>
    <rect x="2" y="2" width="70" height="38" rx="10" fill="none" stroke="#4a4a4a" strokeWidth="4"/>
    <rect x="77" y="13" width="5" height="15" rx="2.5" fill="#4a4a4a"/>
    <text x="37" y="34" fontSize="36" fontWeight="500" textAnchor="middle" fill="#3c3c3c">33</text>
  </svg>
)

const BackIcon = () => (
  <svg width="36" height="60" viewBox="0 0 36 60" fill="none" stroke="#333333" strokeWidth="5" strokeLinecap="round" strokeLinejoin="round">
    <path d="M32 3L4 30L32 57"/>
  </svg>
)

const RobotIcon = () => (
  <svg width="82" height="82" viewBox="0 0 82 82">
    <defs>
      <linearGradient id="robotBg" x1="0" y1="0" x2="0" y2="1">
        <stop offset="0" stopColor="#fbcbb0"/>
        <stop offset="1" stopColor="#fef3ed"/>
      </linearGradient>
      <linearGradient id="robotBody" x1="0" y1="0" x2="0" y2="1">
        <stop offset="0" stopColor="#ffffff"/>
        <stop offset="0.7" stopColor="#eeeaea"/>
        <stop offset="1" stopColor="#b9b3b6"/>
      </linearGradient>
      <linearGradient id="robotFace" x1="0" y1="0" x2="1" y2="0">
        <stop offset="0" stopColor="#3c2bb0"/>
        <stop offset="0.5" stopColor="#7c2f9e"/>
        <stop offset="1" stopColor="#d8334e"/>
      </linearGradient>
    </defs>
    <circle cx="41" cy="41" r="41" fill="url(#robotBg)"/>
    <path d="M13 30Q8 22 12 17Q14 23 21 25ZM69 30Q73 22 68 16Q66 22 60 25Z" fill="#fdf6f3"/>
    <ellipse cx="13" cy="48" rx="5" ry="9" fill="#c9c3c6"/>
    <ellipse cx="72" cy="47" rx="5" ry="9" fill="#e2dcde"/>
    <path d="M15 36Q20 14 42 14Q64 14 70 36Q76 66 42 66Q9 66 15 36Z" fill="url(#robotBody)"/>
    <rect x="33" y="24" width="21" height="4" rx="2" fill="#e0a368"/>
    <rect x="18" y="33" width="52" height="25" rx="12" fill="url(#robotFace)"/>
    <path d="M31 48Q35 41 39 48" fill="none" stroke="#ffffff" strokeWidth="3" strokeLinecap="round"/>
    <rect x="52" y="39" width="8" height="12" rx="2" fill="#ffffff"/>
  </svg>
)

const ShareIcon = () => (
  <svg width="64" height="64" viewBox="0 0 64 64" fill="none" stroke="#333333" strokeWidth="4" strokeLinecap="round" strokeLinejoin="round">
    <path d="M24 2H6Q2 2 2 6V58Q2 62 6 62H58Q62 62 62 58V40"/>
    <path d="M40 2H62V24M62 2L30 34"/>
  </svg>
)

const SearchIcon = () => (
  <svg width="66" height="66" viewBox="0 0 66 66" fill="none" stroke="#333333" strokeWidth="4" strokeLinecap="round">
    <circle cx="30" cy="30" r="28"/>
    <path d="M51 51L63 63"/>
  </svg>
)

const SpeakerIcon = () => (
  <svg width="56" height="48" viewBox="0 0 56 48" fill="none" stroke={colors.orange} strokeWidth="3.5" strokeLinejoin="round" strokeLinecap="round">
    <path d="M2 16Q2 14 4 14H10L25 2V46L10 34H4Q2 34 2 32Z"/>
    <path d="M33 14Q41 16 41 24Q41 32 33 34M33 3Q53 5 53 24Q53 43 33 45"/>
  </svg>
)

const GearIcon = () => (
  <svg width="58" height="58" viewBox="0 0 58 58" fill="none" stroke={colors.label} strokeWidth="4" strokeLinejoin="round">
    <path d="M24 3H34L37 10L43 13L50 12L55 20L51 27V31L55 38L50 46L43 45L37 48L34 55H24L21 48L15 45L8 46L3 38L7 31V27L3 20L8 12L15 13L21 10Z"/>
    <circle cx="29" cy="29" r="9"/>
  </svg>
)

const Stroke = ({ d, color = colors.orange, width = 3 }) => (
  <svg width="40" height="40" viewBox="0 0 40 40" fill="none" stroke={color} strokeWidth={width} strokeLinecap="square">
    <path d={d}/>
  </svg>
)

const MegaphoneIcon = () => (
  <svg width="50" height="44" viewBox="0 0 50 44" fill={colors.orange}>
    <path d="M0 14H5V30H0ZM9 14L50 0V42L30 35V42H16V31L9 29Z"/>
  </svg>
)

const TradeIcon = () => (
  <svg width="70" height="64" viewBox="0 0 70 64" fill="none" stroke={colors.label} strokeWidth="3.5">
    <path d="M18 8A30 30 0 0 1 61 46L69 42"/>
    <path d="M54 56A30 30 0 0 1 10 18L0 21"/>
    <path d="M24 18L35 29L46 18M24 30H46M24 40H46M35 29V48"/>
  </svg>
)

const PostIcon = () => (
  <svg width="62" height="64" viewBox="0 0 62 64" fill="none" stroke={colors.label} strokeWidth="3.5">
    <path d="M42 4H12Q3 4 3 13V51Q3 60 12 60H49Q58 60 58 51V21"/>
    <path d="M47 13L52 18L32 38L21 43L26 32ZM51 9L55 4L60 8L56 13Z" fill={colors.label} stroke="none"/>
  </svg>
)

const FeatureIcon = () => (
  <svg width="60" height="64" viewBox="0 0 60 64" fill="none" stroke={colors.label} strokeWidth="3.5" strokeLinejoin="round">
    <rect x="3" y="6" width="24" height="24" rx="4"/>
    <rect x="3" y="35" width="24" height="24" rx="4"/>
    <rect x="33" y="35" width="24" height="24" rx="4"/>
    <path d="M45 4L58 18L45 32L32 18Z"/>
  </svg>
)

const AddIcon = () => (
  <svg width="64" height="64" viewBox="0 0 64 64" fill="none" stroke={colors.orange} strokeWidth="3.5">
    <circle cx="32" cy="32" r="29"/>
    <path d="M18 32H46M32 18V46"/>
  </svg>
)

/* ---------- charts ---------- */

const Frame = ({ height }) => (
  <rect x="1" y="1" width={WIDTH - 2} height={height - 2} fill="none" stroke={colors.frame} strokeWidth="2"/>
)

const DashLines = ({ values, scale }) => values.map(value => (
  <path key={value} d={`M0 ${toY(value, scale)}H${WIDTH}`} stroke="#d4d4d4" strokeWidth="1.500" strokeDasharray="14 9"/>
))

const Curve = ({ points, scale, color, width = 3, d = smooth }) => (
  <path d={d(project(points, scale))} fill="none" stroke={color} strokeWidth={width} strokeLinejoin="round"/>
)

const AxisText = ({ y, end, children, size = 38 }) => (
  <text
    x={end ? WIDTH - 2 : 4}
    y={y}
    textAnchor={end ? 'end' : 'start'}
    fontSize={end ? 34 : size}
    fill={end ? '#c4c4c4' : '#888888'}
  >
    {children}
  </text>
)

const Chart = ({ height, label, children }) => (
  <ChartSvg viewBox={`0 0 ${WIDTH} ${height}`} role="img" aria-label={label}>
    {children}
  </ChartSvg>
)

const PriceChart = () => (
  <Chart height={PRICE.height} label="日K">
    <text x="162" y="244" fontSize="111" fontWeight="900" fill="#f7f7f7">东方财富</text>
    <Frame height={PRICE.height}/>
    {[349, 645, 940].map(value => (
      <path key={value} d={`M0 ${toY(value, PRICE)}H${WIDTH}`} stroke="#c8c8c8" strokeDasharray="1 2"/>
    ))}
    <path d={`M0 ${toY(444, PRICE)}H${WIDTH}`} stroke="#d3c29c" strokeWidth="2" strokeDasharray="9 9"/>
    {candles.map(({ x, high, low, up }) => (
      <path
        key={x}
        d={`M${toX(x)} ${toY(high, PRICE)}V${toY(low, PRICE)}`}
        stroke={up ? colors.red : colors.green}
        strokeWidth="2"
      />
    ))}
    <path d={`M${toX(755)} ${toY(610, PRICE)}V${toY(762, PRICE)}`} stroke={colors.black} strokeWidth="2"/>
    <path d={`M${toX(840)} ${toY(240, PRICE)}V${toY(400, PRICE)}M${toX(1083)} 1V${toY(125, PRICE)}M${toX(1453)} ${toY(290, PRICE)}V${toY(460, PRICE)}`} stroke={colors.red} strokeWidth="2"/>
    <path d={`M${toX(1162)} ${toY(330, PRICE)}V${toY(465, PRICE)}M${toX(1233)} ${toY(245, PRICE)}V${toY(380, PRICE)}M${toX(1114)} ${toY(180, PRICE)}V${toY(365, PRICE)}M${toX(1092)} ${toY(65, PRICE)}V${toY(125, PRICE)}`} stroke={colors.green} strokeWidth="2"/>
    {countdown.map(([x, y, digit], i) => (
      <g key={i}>
        <rect x={toX(x) - 13} y={toY(y, PRICE) - 24} width="26" height="47" rx="3" fill="#f0702f" fillOpacity="0.28"/>
        {digit && <text x={toX(x)} y={toY(y, PRICE) + 13} fontSize="36" textAnchor="middle" fill="#ee6128">{digit}</text>}
      </g>
    ))}
    <Curve points={ma5} scale={PRICE} color={colors.black}/>
    <Curve points={ma10} scale={PRICE} color={colors.yellow}/>
    <Curve points={ma20} scale={PRICE} color={colors.blue}/>
    <Curve points={ma30} scale={PRICE} color={colors.green}/>
    <g fontSize="42">
      <g fill={colors.green}>
        <text x="478" y="67">K</text>
        <text x="626" y="113">K</text>
        <text x="34" y="292">K</text>
      </g>
      <g fill="#bb3c38">
        <text x="611" y="173">D</text>
        <text x="714" y="209">D</text>
        <text x="222" y="388">D</text>
        <text x="574" y="380" fontWeight="500">S</text>
      </g>
    </g>
    {nines.map(([x, y]) => (
      <g key={x}>
        <rect x={toX(x) - 13} y={toY(y, PRICE) - 24} width="26" height="47" rx="3" fill="#5cab69"/>
        <text x={toX(x)} y={toY(y, PRICE) + 13} fontSize="36" textAnchor="middle" fill="#ffffff">9</text>
      </g>
    ))}
    <rect x="84" y="264" width="26" height="47" rx="3" fill="#d9502b"/>
    <text x="97" y="301" fontSize="36" textAnchor="middle" fill="#ffffff">9</text>
    <g fill="#e03b33">
      <circle cx="374" cy="371" r="10"/>
      <circle cx="394" cy="371" r="10"/>
      <circle cx="730" cy="371" r="10"/>
    </g>
    <AxisText y={40} size={42}>9.78</AxisText>
    <AxisText y={98} size={42}>8.93</AxisText>
    <AxisText y={196} size={42}>8.08</AxisText>
    <AxisText y={295} size={42}>7.23</AxisText>
    <AxisText y={389} size={42}>6.38</AxisText>
    <text x="406" y="38" fontSize="42" fill={colors.black}>9.78-&gt;</text>
    <text x="150" y="384" fontSize="42" fill={colors.black}>&lt;-6.38</text>
  </Chart>
)

const VolumeChart = () => (
  <Chart height={VOLUME.height} label="成交量">
    <Frame height={VOLUME.height}/>
    {volumes.map(({ x, y, up }) => {
      const top = toY(y, VOLUME)
      return (
        <rect
          key={x}
          x={toX(x) - (up ? 2.5 : 1)}
          y={top}
          width={up ? 5 : 2}
          height={VOLUME.height - top}
          fill={up ? '#c03a35' : colors.green}
        />
      )
    })}
    <Curve points={volumeMa1} scale={VOLUME} color={colors.yellow}/>
    <Curve points={volumeMa3} scale={VOLUME} color={colors.green}/>
    <AxisText y={46}>102.0万</AxisText>
  </Chart>
)

const SkdjChart = () => (
  <Chart height={SKDJ.height} label="SKDJ">
    <Frame height={SKDJ.height}/>
    <DashLines values={[913, 1051, 1189]} scale={SKDJ}/>
    <AxisText y={38} end>80</AxisText>
    <AxisText y={70} end>50</AxisText>
    <AxisText y={117} end>20</AxisText>
    <Curve points={skdj} scale={SKDJ} color={colors.black} width={4}/>
    <Curve points={[[28, 1163], ...skdj.slice(1, -1).map(([x, y]) => [x + 7, y]), [1524, 1008]]} scale={SKDJ} color={colors.yellow}/>
    <AxisText y={42}>96.77</AxisText>
    <AxisText y={135}>4.99</AxisText>
  </Chart>
)

const BollChart = () => (
  <Chart height={BOLL.height} label="BOLL">
    <Frame height={BOLL.height}/>
    <Curve points={bollUp} scale={BOLL} color={colors.yellow}/>
    {candles.map(({ x, high, low, up }) => (
      <path
        key={x}
        d={`M${toX(x)} ${toY(212 + (high - 54) * 0.311, BOLL)}V${toY(212 + (low - 54) * 0.311, BOLL)}`}
        stroke={up ? colors.red : colors.green}
        strokeWidth="3"
      />
    ))}
    <path d="M373 68V86" stroke={colors.black} strokeWidth="2"/>
    <Curve points={bollMid} scale={BOLL} color={colors.black}/>
    <Curve points={bollLow} scale={BOLL} color={colors.magenta}/>
    <AxisText y={41}>9.98</AxisText>
    <AxisText y={135}>6.38</AxisText>
  </Chart>
)

const RsiChart = () => (
  <Chart height={RSI.height} label="RSI">
    <Frame height={RSI.height}/>
    <DashLines values={[842, 1010]} scale={RSI}/>
    <AxisText y={38} end>80</AxisText>
    <AxisText y={82} end>50</AxisText>
    <Curve points={rsi} scale={RSI} color={colors.magenta} width={4} d={straight}/>
    <AxisText y={41}>92.01</AxisText>
    <AxisText y={135}>21.35</AxisText>
  </Chart>
)

const ChipChart = () => {
  const shape = points => straight(points.map(([x, y]) => [(x - 66) / 3 + 1, (y - 38) * 393 / 810]))
  return (
    <ChartSvg viewBox="0 0 368 393" role="img" aria-label="筹码分布">
      <path d={shape(trapped)} fill="#74b856"/>
      <path d={shape(profit)} fill="#d8534e"/>
      <rect x="1" y="1" width="366" height="391" fill="none" stroke="#cccccc" strokeWidth="2"/>
    </ChartSvg>
  )
}

/* ---------- parts ---------- */

const IndicatorPicker = ({ name, gap = 13 }) => (
  <Picker>
    <Select aria-label={name} defaultValue={name}>
      <option value={name}>{name}</option>
    </Select>
    <Caret $gap={gap}/>
  </Picker>
)

const Indicator = ({ name, readings, size, gap, children }) => (
  <IndicatorHead>
    <IndicatorPicker name={name}/>
    <Readings $gap={gap}>
      {readings.map(([text, trend, color]) => (
        <Reading key={text} $color={color} $size={size}>
          {text}
          <Arrow trend={trend} width={size < 30 ? 18 : 24}/>
        </Reading>
      ))}
    </Readings>
    {children}
  </IndicatorHead>
)

const QuoteCell = ({ label, mark, hint, value, color, size }) => (
  <Cell>
    <CellLabel>
      {label}
      {mark && <Mark>{mark}</Mark>}
      {hint && <Dots/>}
    </CellLabel>
    <CellValue $color={color} $size={size}>{value}</CellValue>
  </Cell>
)

const App = () => (
  <Page>
    <GlobalStyle/>
    <StatusBar>
      <StatusGroup $gap={14}>
        <Clock>22:38</Clock>
        <AlarmIcon/>
        <FaceApp/>
        <ShieldApp/>
      </StatusGroup>
      <StatusGroup $gap={13}>
        <HeadphonesIcon/>
        <Speed>194<br/>K/s</Speed>
        <WifiIcon/>
        <Signal data/>
        <Signal/>
        <BatteryIcon/>
      </StatusGroup>
    </StatusBar>

    <Header>
      <HeaderLeft>
        <IconButton aria-label="返回"><BackIcon/></IconButton>
        <Logo href="#home">东方<br/>财富</Logo>
      </HeaderLeft>
      <Heading>
        <TitleRow>
          <Title>四川路桥</Title>
          <TitleBadge>企</TitleBadge>
        </TitleRow>
        <CodeRow>
          600039
          <Tag>融</Tag>
          <Tag>沪股通</Tag>
          <Tag>L2</Tag>
          <Caret $gap={6} $size={12} $color="#cccccc"/>
        </CodeRow>
      </Heading>
      <HeaderRight>
        <IconButton aria-label="助手"><RobotIcon/></IconButton>
        <IconButton aria-label="分享"><ShareIcon/></IconButton>
        <IconButton aria-label="搜索"><SearchIcon/></IconButton>
      </HeaderRight>
    </Header>

    <TopBanner>
      <span>一键开通科创成长层权限！把握打新、交易机会</span>
      <IconButton aria-label="关闭"><Cross/></IconButton>
    </TopBanner>

    <Quote>
      <PriceBlock>
        <Price>8.66</Price>
        <Change>
          <span>-0.57%</span>
          <span>-0.05</span>
        </Change>
      </PriceBlock>
      {quoteCells.map(cell => <QuoteCell key={cell.label} {...cell}/>)}
      <QuoteCell label="总值" hint value="753.0亿" size={38}/>
      <QuoteCell label="流值" value="581.6亿"/>
      <QuoteCell label="市盈" mark="动" hint value="13.55" size={42}/>
      <Cell>
        <MoreButton>更多</MoreButton>
      </Cell>
    </Quote>

    <Notice>
      <SpeakerIcon/>
      <NoticeText>股东大会：于2025-09-26召开2025年第四次临...</NoticeText>
      <Dot/>
      <IconButton aria-label="关闭公告"><Cross color={colors.muted}/></IconButton>
    </Notice>

    <Tabs>
      {tabs.map(tab => <Tab key={tab} $active={tab === '日K'}>{tab}</Tab>)}
      <MoreTab>更多<Caret $gap={6}/></MoreTab>
      <IconButton aria-label="设置"><GearIcon/></IconButton>
    </Tabs>

    <AverageBar>
      <IndicatorPicker name="均线" gap={2}/>
      <AverageValues>
        {averages.map(({ text, trend, color }) => (
          <Reading key={text} $color={color} $size={40}>
            {text}
            <Arrow trend={trend}/>
          </Reading>
        ))}
      </AverageValues>
      <PointButton>
        DK点
        <svg width="13" height="13" viewBox="0 0 13 13"><path d="M13 0V13H0Z" fill="#ffffff"/></svg>
      </PointButton>
      <AdjustButton>前复权</AdjustButton>
    </AverageBar>

    <Board>
      <div>
        <ChartBox>
          <PriceChart/>
          <Controls>
            <RoundButton aria-label="最早"><Stroke d="M19 4L6 20L19 36M32 4L19 20L32 36"/></RoundButton>
            <RoundButton aria-label="缩小"><Stroke d="M3 20H37"/></RoundButton>
            <RoundButton aria-label="放大"><Stroke d="M3 20H37M20 3V37"/></RoundButton>
            <RoundButton aria-label="向前"><Stroke d="M26 5L11 20L26 35"/></RoundButton>
          </Controls>
        </ChartBox>

        <Indicator
          name="成交量"
          size={28}
          gap={12}
          readings={[
            ['19.54万', 'down', colors.black],
            ['MA1:23.40万', 'down', colors.yellow],
            ['MA3:28.81万', 'down', colors.green]
          ]}
        >
          <NextButton aria-label="更多指标"><Stroke d="M14 7L26 20L14 33" color="#ffffff" width={4}/></NextButton>
        </Indicator>
        <VolumeChart/>

        <Indicator
          name="SKDJ"
          size={42}
          gap={22}
          readings={[
            ['K:54.53', 'down', colors.black],
            ['D:59.08', 'down', colors.yellow]
          ]}
        />
        <SkdjChart/>

        <Indicator
          name="BOLL"
          size={36}
          gap={14}
          readings={[
            ['MID:8.63', 'up', colors.black],
            ['UP:9.12', 'up', colors.yellow],
            ['LOW:8.13', 'up', colors.magenta]
          ]}
        />
        <BollChart/>

        <Indicator
          name="RSI"
          size={32}
          gap={14}
          readings={[
            ['RSI1:43.70', 'down', colors.black],
            ['RSI2:43.70', 'down', colors.yellow],
            ['RSI3:43.70', 'down', colors.magenta]
          ]}
        />
        <RsiChart/>

        <DateAxis>
          <DateMark $align="flex-start">20241203</DateMark>
          <DateMark $align="center" $tick>20250422</DateMark>
          <DateMark $align="flex-end" $tick>20250912</DateMark>
        </DateAxis>
        <RangeTrack>
          <RangeInput type="range" aria-label="开始日期" min="0" max="100" defaultValue="0"/>
          <RangeInput type="range" aria-label="结束日期" min="0" max="100" defaultValue="100"/>
        </RangeTrack>
      </div>

      <div>
        <ChartBox>
          <ChipChart/>
          <ChipControls>
            <RoundButton $grey aria-label="收起"><Stroke d="M13 5L29 20L13 35" color={colors.label}/></RoundButton>
            <RoundButton aria-label="全屏"><Stroke d="M4 18V4H18M5 5L17 16M36 22V36H22M35 35L23 24" width={4}/></RoundButton>
          </ChipControls>
        </ChartBox>
        <Legend>
          <LegendItem $color="#74b856">套牢</LegendItem>
          <LegendItem $color="#d8534e">获利</LegendItem>
        </Legend>
        <ChipTable>
          <tbody>
            {chipRows.map(([label, value]) => (
              <tr key={label}>
                <th scope="row">{label}</th>
                <td>{value}</td>
              </tr>
            ))}
          </tbody>
        </ChipTable>
        <ChipFoot>
          <Explain>说明<Info>i</Info></Explain>
          <ChipDate>2025-09-12</ChipDate>
        </ChipFoot>
      </div>
    </Board>

    <Promo>
      <MegaphoneIcon/>
      <PromoText>邀好友做股民问卷，双方各领最高188元</PromoText>
      <PromoDivider/>
      <IconButton aria-label="关闭活动"><Cross/></IconButton>
    </Promo>

    <BottomBar>
      <BottomNav>
        <IndexBox href="#index">
          <IndexCaret/>
          <IndexValue>3870.60</IndexValue>
          <IndexRow>
            <IndexName>上证</IndexName>
            <span>-0.12%</span>
          </IndexRow>
        </IndexBox>
        <NavItem><TradeIcon/>交易</NavItem>
        <NavItem><PostIcon/>发帖</NavItem>
        <NavItem><FeatureIcon/>功能</NavItem>
        <NavItem $accent><AddIcon/>加自选</NavItem>
      </BottomNav>
      <HomeArea/>
    </BottomBar>
  </Page>
)

export default App
